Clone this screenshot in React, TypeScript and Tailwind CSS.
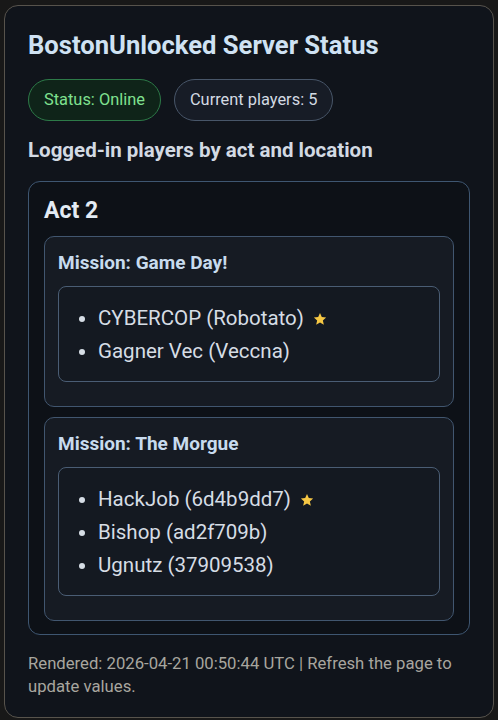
const missions = [
  {
    name: 'Game Day!',
    players: [
      { name: 'CYBERCOP (Robotato)', star: true },
      { name: 'Gagner Vec (Veccna)', star: false },
    ],
  },
  {
    name: 'The Morgue',
    players: [
      { name: 'HackJob (6d4b9dd7)', star: true },
      { name: 'Bishop (ad2f709b)', star: false },
      { name: 'Ugnutz (37909538)', star: false },
    ],
  },
]

function Star() {
  return (
    <svg viewBox="0 0 24 24" className="ml-[9px] inline-block h-[14px] w-[14px] align-[-1px]" fill="#f6c744">
      <path d="M12 1.8l3.1 6.9 7.4.7-5.6 5 1.7 7.4L12 18l-6.6 3.8 1.7-7.4-5.6-5 7.4-.7z" />
    </svg>
  )
}

export default function App() {
  return (
    <div className="min-h-screen bg-[#181818] pt-[5px] px-[4px] pb-[3px] font-['Roboto',sans-serif]">
      <div className="rounded-[14px] border border-[#57534c] bg-[#10141b] px-[23px] pt-[22px] pb-[19px]">
        <h1 className="text-[25.6px] leading-[34px] font-bold text-[#cfe2f3]">BostonUnlocked Server Status</h1>

        <div className="mt-[17px] flex gap-[13px]">
          <span className="h-[42px] flex items-center rounded-full border border-[#2d7a48] bg-[#0f2419] px-[15px] text-[16.4px] text-[#7fe08f]">
            Status: Online
          </span>
          <span className="h-[42px] flex items-center rounded-full border border-[#485669] bg-[#171c26] px-[15px] text-[16.4px] text-[#d3dae2]">
            Current players: 5
          </span>
        </div>

        <h2 className="mt-[15px] text-[20.5px] leading-[28px] font-bold text-[#d3dae3]">Logged-in players by act and location</h2>

        <div className="mt-[17px] rounded-[12px] border border-[#3e5671] bg-[#0d1117] px-[15px] pt-[15px] pb-[13px]">
          <h3 className="text-[23px] leading-[28px] font-bold text-[#e3ebf3]">Act 2</h3>
          <div className="mt-[11px] flex flex-col gap-[10px]">
            {missions.map((m) => (
              <div key={m.name} className="rounded-[10px] border border-[#41566f] bg-[#161b23] px-[13px] pt-[14px] pb-[24px]">
                <h4 className="text-[19px] leading-[24px] font-bold text-[#c8dbee]">Mission: {m.name}</h4>
                <ul className="mt-[11px] rounded-[8px] border border-[#4a5d74] bg-[#141921] pl-[39px] pr-[12px] pt-[15px] pb-[13px] list-disc marker:text-[#d6dde5]">
                  {m.players.map((p) => (
                    <li key={p.name} className="text-[20.5px] leading-[33px] text-[#d6dde5]">
                      {p.name}
                      {p.star && <Star />}
                    </li>
                  ))}
                </ul>
              </div>
            ))}
          </div>
        </div>

        <p className="mt-[17px] text-[16.7px] leading-[23px] text-[#a8a69f]">
          Rendered: 2026-04-21 00:50:44 UTC | Refresh the page to update values.
        </p>
      </div>
    </div>
  )
}
